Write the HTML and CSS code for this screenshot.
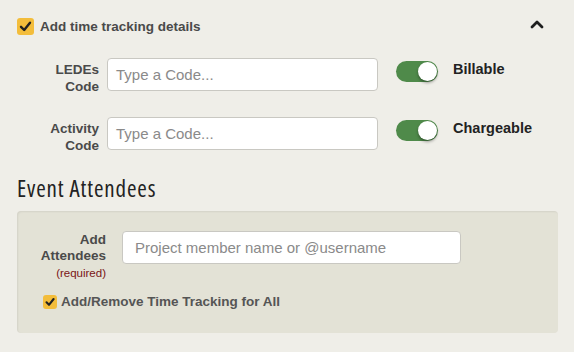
FILE: index.html
```html
<!DOCTYPE html>
<html>
<head>
<meta charset="utf-8">
<link rel="stylesheet" href="styles.css">
</head>
<body>
<div class="page">
  <div class="tt-head">
    <label class="check-label">
      <span class="check"><svg viewBox="0 0 17 17" width="17" height="17"><path d="M4 8.8 L7.2 12 L13 4.8" fill="none" stroke="#222" stroke-width="2.4" stroke-linecap="round" stroke-linejoin="round"/></svg></span>
      <span class="check-text">Add time tracking details</span>
    </label>
    <svg class="chevron" viewBox="0 0 14 10" width="14" height="10"><path d="M2 8 L7 3 L12 8" fill="none" stroke="#1e1e1e" stroke-width="2.8" stroke-linecap="round" stroke-linejoin="round"/></svg>
  </div>

  <div class="code-row">
    <div class="lbl">LEDEs<br>Code</div>
    <div class="input">Type a Code...</div>
    <span class="toggle"><span class="knob"></span></span>
    <span class="toggle-text">Billable</span>
  </div>
  <div class="code-row">
    <div class="lbl">Activity<br>Code</div>
    <div class="input">Type a Code...</div>
    <span class="toggle"><span class="knob"></span></span>
    <span class="toggle-text">Chargeable</span>
  </div>

  <h2 class="heading">Event Attendees</h2>

  <div class="panel">
    <div class="att-row">
      <div class="lbl att-lbl">Add<br>Attendees<div class="req">(required)</div></div>
      <div class="input att-input">Project member name or @username</div>
    </div>
    <label class="check-label all">
      <span class="check small"><svg viewBox="0 0 14 14" width="14" height="14"><path d="M3.5 7.3 L6 9.8 L10.6 4" fill="none" stroke="#222" stroke-width="2.1" stroke-linecap="round" stroke-linejoin="round"/></svg></span>
      <span class="check-text small-text">Add/Remove Time Tracking for All</span>
    </label>
  </div>
</div>
</body>
</html>
```

FILE: styles.css
```css
html, body {
  margin: 0;
  padding: 0;
  background: #efeee8;
}
body {
  font-family: "Liberation Sans", Arial, sans-serif;
  width: 574px;
  height: 352px;
  overflow: hidden;
}
.page {
  padding: 18px 0 0 17px;
  width: 542px;
}
.tt-head {
  display: flex;
  align-items: center;
  justify-content: space-between;
  height: 17px;
}
.check-label {
  display: flex;
  align-items: center;
}
.check {
  width: 17px;
  height: 17px;
  background: #f3bd3b;
  border-radius: 3px;
  display: flex;
}
.check-text {
  margin-left: 6px;
  font-weight: bold;
  font-size: 13.5px;
  color: #4a4a4a;
}
.chevron {
  margin-right: 15px;
  margin-top: -6px;
}
.code-row {
  display: flex;
  align-items: flex-start;
  height: 33px;
  margin-top: 23px;
}
.code-row + .code-row {
  margin-top: 26px;
}
.lbl {
  width: 82px;
  text-align: right;
  font-weight: bold;
  font-size: 13.5px;
  line-height: 17px;
  color: #4a4a4a;
  margin-top: 3px;
}
.input {
  box-sizing: border-box;
  margin-left: 8px;
  width: 271px;
  height: 33px;
  background: #fff;
  border: 1px solid #c9c8c2;
  border-radius: 4px;
  padding: 0 8px;
  font-family: "Liberation Sans", Arial, sans-serif;
  font-size: 15px;
  line-height: 31px;
  color: #8a8a8a;
}
.toggle {
  margin-left: 18px;
  margin-top: 3px;
  width: 42px;
  height: 21px;
  border-radius: 11px;
  background: #4f8a4a;
  display: flex;
  justify-content: flex-end;
  align-items: center;
}
.knob {
  width: 19px;
  height: 19px;
  border-radius: 50%;
  background: #fff;
  margin-right: 1px;
  box-shadow: 0 2px 3px rgba(0,0,0,0.35);
}
.toggle-text {
  margin-left: 15px;
  margin-top: 3px;
  font-weight: bold;
  font-size: 14.5px;
  color: #222;
}
.heading {
  margin: 23px 0 0 0;
  font-family: "Open Sans", sans-serif;
  font-weight: 400;
  font-stretch: 85%;
  font-size: 23px;
  letter-spacing: 0.85px;
  line-height: 30px;
  color: #222;
}
.panel {
  margin-top: 8px;
  width: 541px;
  height: 122px;
  box-sizing: border-box;
  background: #e3e2d6;
  border-radius: 4px;
  box-shadow: inset 1px 1px 2px rgba(0,0,0,0.07);
  padding-top: 20px;
}
.att-row {
  display: flex;
  align-items: flex-start;
}
.att-lbl {
  width: 89px;
  margin-top: 1px;
  line-height: 16px;
}
.req {
  font-weight: normal;
  font-size: 11.5px;
  line-height: 14px;
  margin-top: 2px;
  color: #7a1515;
}
.att-input {
  margin-left: 16px;
  width: 339px;
  padding-left: 12px;
}
.all {
  margin: 14px 0 0 26px;
}
.check.small {
  width: 14px;
  height: 14px;
}
.small-text {
  margin-left: 4px;
  font-size: 13.5px;
  color: #555;
}
```
